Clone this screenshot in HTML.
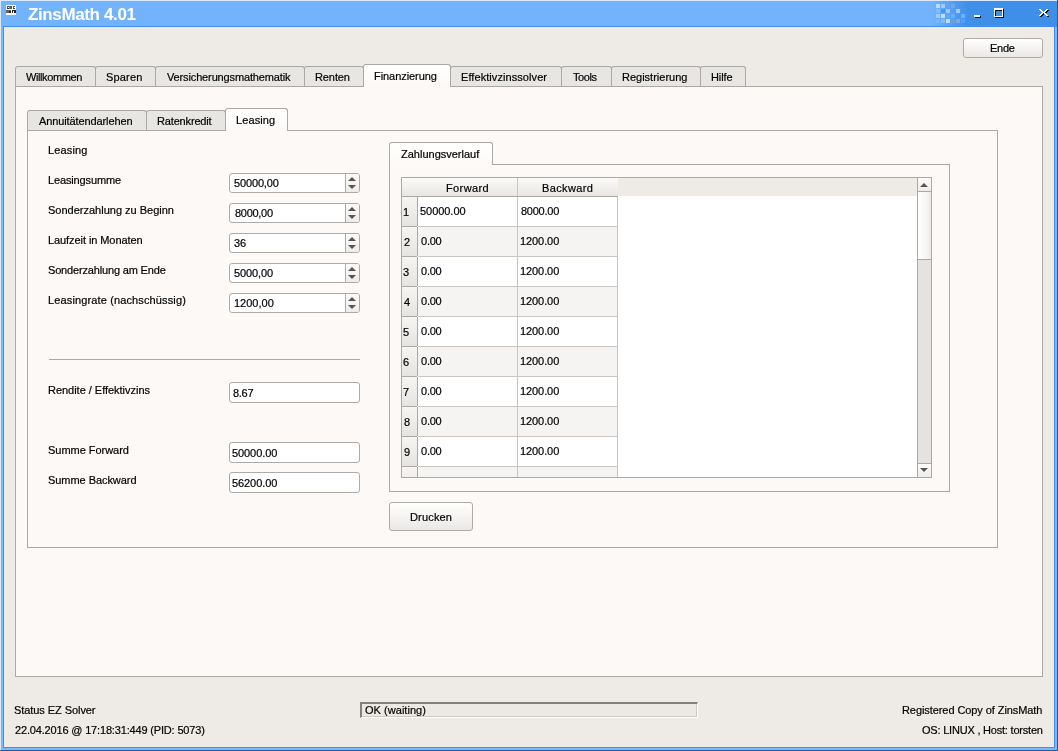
<!DOCTYPE html>
<html><head><meta charset="utf-8">
<style>
*{box-sizing:border-box;margin:0;padding:0}
html,body{width:1058px;height:751px;overflow:hidden;background:#eeebe7}
body{position:relative;font-family:'Liberation Sans',sans-serif;font-size:11px;color:#000}
.a{position:absolute}
.t{position:absolute;white-space:nowrap;line-height:20px;font-size:11px;z-index:20;will-change:transform;-webkit-text-stroke:0.2px currentColor}
.btn{position:absolute;border:1px solid #aeaaa7;border-radius:3px;background:linear-gradient(#ffffff,#f7f6f4 40%,#eae8e5)}
.tab{position:absolute;border:1px solid #aca8a6;border-bottom:none;border-radius:3px 3px 0 0;background:#e8e6e3;height:20px}
.tab.sel{background:linear-gradient(#ffffff,#fcf9f6);height:23px;z-index:5}
.panel{position:absolute;border:1px solid #aca8a6;background:#fcf9f6}
.fld{position:absolute;border:1px solid #aeaaa7;border-radius:3px;background:#fff}
.spbtn{position:absolute;background:linear-gradient(#fdfcfb,#eeebe8)}
.tri-up{position:absolute;width:0;height:0;border-left:4px solid transparent;border-right:4px solid transparent;border-bottom:4px solid #555}
.tri-dn{position:absolute;width:0;height:0;border-left:4px solid transparent;border-right:4px solid transparent;border-top:4px solid #555}
</style></head><body>
<!-- frame -->
<div class="a" style="left:0;top:0;width:1058px;height:751px;background:#7ab8fa"></div>
<div class="a" style="left:0;top:0;width:1px;height:751px;background:#d9e9fc"></div>
<div class="a" style="left:0;top:0;width:1058px;height:1px;background:#d9e9fc"></div>
<div class="a" style="left:1px;top:1px;width:1056px;height:26px;background:linear-gradient(90deg,#73b3fb 0,#73b3fb 930px,#3f8ee8 968px,#3f8ee8 100%)"></div>
<div class="a" style="left:1057px;top:0;width:1px;height:751px;background:#2b5b92"></div>
<div class="a" style="left:0;top:750px;width:1058px;height:1px;background:#2b5b92"></div>
<div class="a" style="left:3px;top:26px;width:1052px;height:722px;background:#3f8ff0"></div>
<!-- content bg -->
<div class="a" style="left:4px;top:27px;width:1050px;height:720px;background:#eeebe7"></div>
<!-- icon -->
<svg class="a" style="left:6px;top:5px" width="10" height="10" viewBox="0 0 10 10" shape-rendering="crispEdges">
<rect x="0" y="0" width="10" height="10" fill="#fff"/>
<rect x="1" y="1" width="2" height="1" fill="#444"/><rect x="1" y="1" width="1" height="3" fill="#555"/><rect x="1" y="3" width="2" height="1" fill="#333"/>
<rect x="3" y="1" width="1" height="3" fill="#777"/>
<rect x="4" y="1" width="2" height="3" fill="#555"/>
<rect x="7" y="1" width="2" height="1" fill="#555"/><rect x="7" y="2" width="1" height="1" fill="#666"/><rect x="7" y="3" width="2" height="1" fill="#333"/>
<rect x="0" y="5" width="5" height="3" fill="#666"/>
<rect x="3" y="6" width="2" height="2" fill="#222"/>
<rect x="6" y="5" width="2" height="1" fill="#222"/><rect x="6" y="5" width="1" height="3" fill="#222"/>
<rect x="8" y="5" width="2" height="3" fill="#222"/>
</svg>
<!-- checker -->
<div class="a" style="left:936px;top:4px;width:4px;height:4px;background:#bcdcff"></div><div class="a" style="left:941px;top:4px;width:4px;height:4px;background:#9ccaff"></div><div class="a" style="left:951px;top:4px;width:4px;height:4px;background:#6aa8f0"></div><div class="a" style="left:936px;top:9px;width:4px;height:4px;background:#80bcfc"></div><div class="a" style="left:941px;top:9px;width:4px;height:4px;background:#3d9bff"></div><div class="a" style="left:946px;top:9px;width:4px;height:4px;background:#9ccaff"></div><div class="a" style="left:956px;top:9px;width:4px;height:4px;background:#9ccaff"></div><div class="a" style="left:936px;top:14px;width:4px;height:4px;background:#a0ccff"></div><div class="a" style="left:941px;top:14px;width:4px;height:4px;background:#c0deff"></div><div class="a" style="left:946px;top:14px;width:4px;height:4px;background:#5aa8fa"></div><div class="a" style="left:951px;top:14px;width:4px;height:4px;background:#66b0ff"></div><div class="a" style="left:961px;top:14px;width:4px;height:4px;background:#6ab0fa"></div><div class="a" style="left:936px;top:19px;width:4px;height:4px;background:#78b8fc"></div><div class="a" style="left:941px;top:19px;width:4px;height:4px;background:#80bcfc"></div><div class="a" style="left:946px;top:19px;width:4px;height:4px;background:#c0deff"></div><div class="a" style="left:951px;top:19px;width:4px;height:4px;background:#6a9edc"></div><div class="a" style="left:956px;top:19px;width:4px;height:4px;background:#7aaae0"></div><div class="a" style="left:961px;top:19px;width:4px;height:4px;background:#4aa0ff"></div>
<!-- min / max / close -->
<div class="a" style="left:975px;top:16px;width:6px;height:2px;background:#111"></div>
<div class="a" style="left:974px;top:15px;width:6px;height:2px;background:#fff"></div>
<div class="a" style="left:995px;top:9px;width:9px;height:9px;border:1px solid #111;border-top-width:2px"></div>
<div class="a" style="left:994px;top:8px;width:9px;height:9px;border:1px solid #fff;border-top-width:2px;box-shadow:inset 1px 1px 0 #111"></div>
<svg class="a" style="left:1039px;top:9px" width="10" height="8" shape-rendering="crispEdges"><rect x="1" y="1" width="2" height="1" fill="#111"/><rect x="8" y="1" width="2" height="1" fill="#111"/><rect x="2" y="2" width="2" height="1" fill="#111"/><rect x="7" y="2" width="2" height="1" fill="#111"/><rect x="3" y="3" width="2" height="1" fill="#111"/><rect x="6" y="3" width="2" height="1" fill="#111"/><rect x="4" y="4" width="3" height="1" fill="#111"/><rect x="3" y="5" width="2" height="1" fill="#111"/><rect x="6" y="5" width="2" height="1" fill="#111"/><rect x="2" y="6" width="2" height="1" fill="#111"/><rect x="7" y="6" width="2" height="1" fill="#111"/><rect x="1" y="7" width="2" height="1" fill="#111"/><rect x="8" y="7" width="2" height="1" fill="#111"/><rect x="0" y="0" width="2" height="1" fill="#fff"/><rect x="7" y="0" width="2" height="1" fill="#fff"/><rect x="1" y="1" width="2" height="1" fill="#fff"/><rect x="6" y="1" width="2" height="1" fill="#fff"/><rect x="2" y="2" width="2" height="1" fill="#fff"/><rect x="5" y="2" width="2" height="1" fill="#fff"/><rect x="3" y="3" width="3" height="1" fill="#fff"/><rect x="2" y="4" width="2" height="1" fill="#fff"/><rect x="5" y="4" width="2" height="1" fill="#fff"/><rect x="1" y="5" width="2" height="1" fill="#fff"/><rect x="6" y="5" width="2" height="1" fill="#fff"/><rect x="0" y="6" width="2" height="1" fill="#fff"/><rect x="7" y="6" width="2" height="1" fill="#fff"/></svg>
<!-- Ende button -->
<div class="btn" style="left:963px;top:38px;width:80px;height:20px"></div>

<!-- main tabs -->
<div class="tab" style="left:15px;top:66px;width:81px"></div>
<div class="tab" style="left:95px;top:66px;width:61px"></div>
<div class="tab" style="left:155px;top:66px;width:150px"></div>
<div class="tab" style="left:304px;top:66px;width:60px"></div>
<div class="tab" style="left:450px;top:66px;width:112px"></div>
<div class="tab" style="left:561px;top:66px;width:51px"></div>
<div class="tab" style="left:611px;top:66px;width:90px"></div>
<div class="tab" style="left:700px;top:66px;width:46px"></div>
<div class="panel" style="left:15px;top:86px;width:1028px;height:591px"></div>
<div class="tab sel" style="left:363px;top:64px;width:88px"></div>

<!-- sub tabs -->
<div class="tab" style="left:27px;top:110px;width:120px"></div>
<div class="tab" style="left:146px;top:110px;width:80px"></div>
<div class="panel" style="left:27px;top:130px;width:971px;height:418px"></div>
<div class="tab sel" style="left:225px;top:108px;width:63px"></div>

<!-- spinners -->
<div id="spinners"></div>
<div class="fld" style="left:229px;top:173px;width:131px;height:20px;overflow:hidden"><div class="spbtn" style="left:115px;top:0;width:14px;height:18px;border-left:1px solid #aeaaa7"></div><div class="tri-up" style="left:118px;top:3px"></div><div class="tri-dn" style="left:118px;top:11px"></div></div>
<div class="fld" style="left:229px;top:203px;width:131px;height:20px;overflow:hidden"><div class="spbtn" style="left:115px;top:0;width:14px;height:18px;border-left:1px solid #aeaaa7"></div><div class="tri-up" style="left:118px;top:3px"></div><div class="tri-dn" style="left:118px;top:11px"></div></div>
<div class="fld" style="left:229px;top:233px;width:131px;height:20px;overflow:hidden"><div class="spbtn" style="left:115px;top:0;width:14px;height:18px;border-left:1px solid #aeaaa7"></div><div class="tri-up" style="left:118px;top:3px"></div><div class="tri-dn" style="left:118px;top:11px"></div></div>
<div class="fld" style="left:229px;top:263px;width:131px;height:20px;overflow:hidden"><div class="spbtn" style="left:115px;top:0;width:14px;height:18px;border-left:1px solid #aeaaa7"></div><div class="tri-up" style="left:118px;top:3px"></div><div class="tri-dn" style="left:118px;top:11px"></div></div>
<div class="fld" style="left:229px;top:293px;width:131px;height:20px;overflow:hidden"><div class="spbtn" style="left:115px;top:0;width:14px;height:18px;border-left:1px solid #aeaaa7"></div><div class="tri-up" style="left:118px;top:3px"></div><div class="tri-dn" style="left:118px;top:11px"></div></div>
<!-- separator -->
<div class="a" style="left:49px;top:359px;width:311px;height:1px;background:#aca8a6"></div>
<div class="fld" style="left:229px;top:382px;width:131px;height:21px"></div>
<div class="fld" style="left:229px;top:442px;width:131px;height:21px"></div>
<div class="fld" style="left:229px;top:472px;width:131px;height:21px"></div>

<!-- zahlungsverlauf -->
<div class="panel" style="left:389px;top:164px;width:561px;height:328px"></div>
<div class="tab sel" style="left:389px;top:142px;width:104px;height:23px"></div>

<!-- table pane -->
<div class="a" style="left:401px;top:177px;width:531px;height:301px;border:1px solid #aca8a6;background:#fff;overflow:hidden">
  <!-- header -->
  <div class="a" style="left:0;top:0;width:515px;height:18px;background:#eeebe7"></div>
  <div class="a" style="left:0;top:0;width:216px;height:18px;background:linear-gradient(#fbfaf8,#e9e7e4)"></div>
  <div class="a" style="left:0;top:18px;width:216px;height:1px;background:#aca8a6"></div>
  <div class="a" style="left:115px;top:0;width:1px;height:18px;background:#c9c6c2"></div>
  <div class="a" style="left:0;top:19px;width:15px;height:29px;background:linear-gradient(#f7f5f2,#e6e4e0)"></div><div class="a" style="left:15px;top:19px;width:1px;height:29px;background:#aca8a6"></div><div class="a" style="left:16px;top:19px;width:200px;height:29px;background:#fff"></div><div class="a" style="left:115px;top:19px;width:1px;height:29px;background:#c9c6c2"></div><div class="a" style="left:215px;top:19px;width:1px;height:29px;background:#c9c6c2"></div><div class="a" style="left:0;top:48px;width:15px;height:1px;background:#aca8a6"></div><div class="a" style="left:16px;top:48px;width:200px;height:1px;background:#c9c6c2"></div>
<div class="a" style="left:0;top:49px;width:15px;height:29px;background:linear-gradient(#f7f5f2,#e6e4e0)"></div><div class="a" style="left:15px;top:49px;width:1px;height:29px;background:#aca8a6"></div><div class="a" style="left:16px;top:49px;width:200px;height:29px;background:#f5f4f2"></div><div class="a" style="left:115px;top:49px;width:1px;height:29px;background:#c9c6c2"></div><div class="a" style="left:215px;top:49px;width:1px;height:29px;background:#c9c6c2"></div><div class="a" style="left:0;top:78px;width:15px;height:1px;background:#aca8a6"></div><div class="a" style="left:16px;top:78px;width:200px;height:1px;background:#c9c6c2"></div>
<div class="a" style="left:0;top:79px;width:15px;height:29px;background:linear-gradient(#f7f5f2,#e6e4e0)"></div><div class="a" style="left:15px;top:79px;width:1px;height:29px;background:#aca8a6"></div><div class="a" style="left:16px;top:79px;width:200px;height:29px;background:#fff"></div><div class="a" style="left:115px;top:79px;width:1px;height:29px;background:#c9c6c2"></div><div class="a" style="left:215px;top:79px;width:1px;height:29px;background:#c9c6c2"></div><div class="a" style="left:0;top:108px;width:15px;height:1px;background:#aca8a6"></div><div class="a" style="left:16px;top:108px;width:200px;height:1px;background:#c9c6c2"></div>
<div class="a" style="left:0;top:109px;width:15px;height:29px;background:linear-gradient(#f7f5f2,#e6e4e0)"></div><div class="a" style="left:15px;top:109px;width:1px;height:29px;background:#aca8a6"></div><div class="a" style="left:16px;top:109px;width:200px;height:29px;background:#f5f4f2"></div><div class="a" style="left:115px;top:109px;width:1px;height:29px;background:#c9c6c2"></div><div class="a" style="left:215px;top:109px;width:1px;height:29px;background:#c9c6c2"></div><div class="a" style="left:0;top:138px;width:15px;height:1px;background:#aca8a6"></div><div class="a" style="left:16px;top:138px;width:200px;height:1px;background:#c9c6c2"></div>
<div class="a" style="left:0;top:139px;width:15px;height:29px;background:linear-gradient(#f7f5f2,#e6e4e0)"></div><div class="a" style="left:15px;top:139px;width:1px;height:29px;background:#aca8a6"></div><div class="a" style="left:16px;top:139px;width:200px;height:29px;background:#fff"></div><div class="a" style="left:115px;top:139px;width:1px;height:29px;background:#c9c6c2"></div><div class="a" style="left:215px;top:139px;width:1px;height:29px;background:#c9c6c2"></div><div class="a" style="left:0;top:168px;width:15px;height:1px;background:#aca8a6"></div><div class="a" style="left:16px;top:168px;width:200px;height:1px;background:#c9c6c2"></div>
<div class="a" style="left:0;top:169px;width:15px;height:29px;background:linear-gradient(#f7f5f2,#e6e4e0)"></div><div class="a" style="left:15px;top:169px;width:1px;height:29px;background:#aca8a6"></div><div class="a" style="left:16px;top:169px;width:200px;height:29px;background:#f5f4f2"></div><div class="a" style="left:115px;top:169px;width:1px;height:29px;background:#c9c6c2"></div><div class="a" style="left:215px;top:169px;width:1px;height:29px;background:#c9c6c2"></div><div class="a" style="left:0;top:198px;width:15px;height:1px;background:#aca8a6"></div><div class="a" style="left:16px;top:198px;width:200px;height:1px;background:#c9c6c2"></div>
<div class="a" style="left:0;top:199px;width:15px;height:29px;background:linear-gradient(#f7f5f2,#e6e4e0)"></div><div class="a" style="left:15px;top:199px;width:1px;height:29px;background:#aca8a6"></div><div class="a" style="left:16px;top:199px;width:200px;height:29px;background:#fff"></div><div class="a" style="left:115px;top:199px;width:1px;height:29px;background:#c9c6c2"></div><div class="a" style="left:215px;top:199px;width:1px;height:29px;background:#c9c6c2"></div><div class="a" style="left:0;top:228px;width:15px;height:1px;background:#aca8a6"></div><div class="a" style="left:16px;top:228px;width:200px;height:1px;background:#c9c6c2"></div>
<div class="a" style="left:0;top:229px;width:15px;height:29px;background:linear-gradient(#f7f5f2,#e6e4e0)"></div><div class="a" style="left:15px;top:229px;width:1px;height:29px;background:#aca8a6"></div><div class="a" style="left:16px;top:229px;width:200px;height:29px;background:#f5f4f2"></div><div class="a" style="left:115px;top:229px;width:1px;height:29px;background:#c9c6c2"></div><div class="a" style="left:215px;top:229px;width:1px;height:29px;background:#c9c6c2"></div><div class="a" style="left:0;top:258px;width:15px;height:1px;background:#aca8a6"></div><div class="a" style="left:16px;top:258px;width:200px;height:1px;background:#c9c6c2"></div>
<div class="a" style="left:0;top:259px;width:15px;height:29px;background:linear-gradient(#f7f5f2,#e6e4e0)"></div><div class="a" style="left:15px;top:259px;width:1px;height:29px;background:#aca8a6"></div><div class="a" style="left:16px;top:259px;width:200px;height:29px;background:#fff"></div><div class="a" style="left:115px;top:259px;width:1px;height:29px;background:#c9c6c2"></div><div class="a" style="left:215px;top:259px;width:1px;height:29px;background:#c9c6c2"></div><div class="a" style="left:0;top:288px;width:15px;height:1px;background:#aca8a6"></div><div class="a" style="left:16px;top:288px;width:200px;height:1px;background:#c9c6c2"></div>
<div class="a" style="left:0;top:289px;width:15px;height:29px;background:linear-gradient(#f7f5f2,#e6e4e0)"></div><div class="a" style="left:15px;top:289px;width:1px;height:29px;background:#aca8a6"></div><div class="a" style="left:16px;top:289px;width:200px;height:29px;background:#f5f4f2"></div><div class="a" style="left:115px;top:289px;width:1px;height:29px;background:#c9c6c2"></div><div class="a" style="left:215px;top:289px;width:1px;height:29px;background:#c9c6c2"></div><div class="a" style="left:0;top:318px;width:15px;height:1px;background:#aca8a6"></div><div class="a" style="left:16px;top:318px;width:200px;height:1px;background:#c9c6c2"></div>
  <!-- scrollbar -->
  <div class="a" style="left:515px;top:0;width:1px;height:299px;background:#aca8a6"></div>
  <div class="a" style="left:516px;top:0;width:14px;height:13px;background:linear-gradient(#fdfcfb,#eeebe8)"></div>
  <div class="a" style="left:516px;top:13px;width:14px;height:1px;background:#aca8a6"></div>
  <div class="tri-up" style="left:518px;top:5px"></div>
  <div class="a" style="left:516px;top:14px;width:14px;height:67px;background:linear-gradient(90deg,#ffffff,#f6f5f3 60%,#e9e7e4)"></div>
  <div class="a" style="left:516px;top:81px;width:14px;height:1px;background:#aca8a6"></div>
  <div class="a" style="left:516px;top:82px;width:14px;height:203px;background:#e5e2df"></div>
  <div class="a" style="left:516px;top:285px;width:14px;height:1px;background:#aca8a6"></div>
  <div class="a" style="left:516px;top:286px;width:14px;height:13px;background:linear-gradient(#fdfcfb,#eeebe8)"></div>
  <div class="tri-dn" style="left:518px;top:290px"></div>
</div>

<!-- Drucken -->
<div class="btn" style="left:389px;top:502px;width:84px;height:29px"></div>

<!-- status -->
<div class="a" style="left:360px;top:702px;width:338px;height:16px;background:#ece9e5;border-top:2px solid #83817d;border-left:2px solid #83817d;border-right:1px solid #fff;border-bottom:1px solid #fff;box-shadow:inset -1px -1px 0 #cdcac6"></div>
<div class="t" style="left:28.00px;top:5px;font-size:17px;font-weight:700;color:#fff;letter-spacing:-0.375px;-webkit-text-stroke:0;">ZinsMath 4.01</div>
<div class="t" style="left:989.80px;top:38px;letter-spacing:-0.233px;">Ende</div>
<div class="t" style="left:25.90px;top:67px;letter-spacing:-0.400px;">Willkommen</div>
<div class="t" style="left:105.60px;top:67px;letter-spacing:0.160px;">Sparen</div>
<div class="t" style="left:166.90px;top:67px;letter-spacing:-0.136px;">Versicherungsmathematik</div>
<div class="t" style="left:314.50px;top:67px;letter-spacing:-0.100px;">Renten</div>
<div class="t" style="left:373.70px;top:66px;letter-spacing:-0.064px;">Finanzierung</div>
<div class="t" style="left:460.50px;top:67px;letter-spacing:0.071px;">Effektivzinssolver</div>
<div class="t" style="left:572.80px;top:67px;letter-spacing:-0.450px;">Tools</div>
<div class="t" style="left:621.50px;top:67px;">Registrierung</div>
<div class="t" style="left:710.50px;top:67px;letter-spacing:-0.125px;">Hilfe</div>
<div class="t" style="left:39.30px;top:111px;letter-spacing:-0.106px;">Annuitätendarlehen</div>
<div class="t" style="left:156.60px;top:111px;letter-spacing:-0.160px;">Ratenkredit</div>
<div class="t" style="left:235.70px;top:110px;letter-spacing:0.100px;">Leasing</div>
<div class="t" style="left:47.50px;top:140px;letter-spacing:0.133px;">Leasing</div>
<div class="t" style="left:47.50px;top:170px;letter-spacing:-0.136px;">Leasingsumme</div>
<div class="t" style="left:47.50px;top:200px;">Sonderzahlung zu Beginn</div>
<div class="t" style="left:47.50px;top:230px;letter-spacing:-0.078px;">Laufzeit in Monaten</div>
<div class="t" style="left:47.50px;top:260px;letter-spacing:-0.165px;">Sonderzahlung am Ende</div>
<div class="t" style="left:47.50px;top:290px;letter-spacing:0.132px;">Leasingrate (nachschüssig)</div>
<div class="t" style="left:47.50px;top:380px;letter-spacing:-0.024px;">Rendite / Effektivzins</div>
<div class="t" style="left:47.50px;top:440px;letter-spacing:-0.033px;">Summe Forward</div>
<div class="t" style="left:47.50px;top:470px;letter-spacing:-0.054px;">Summe Backward</div>
<div class="t" style="left:233.80px;top:173px;letter-spacing:-0.143px;">50000,00</div>
<div class="t" style="left:234.80px;top:203px;letter-spacing:-0.283px;">8000,00</div>
<div class="t" style="left:233.80px;top:233px;">36</div>
<div class="t" style="left:233.80px;top:263px;letter-spacing:-0.117px;">5000,00</div>
<div class="t" style="left:233.80px;top:293px;">1200,00</div>
<div class="t" style="left:233.00px;top:383px;letter-spacing:-0.300px;">8.67</div>
<div class="t" style="left:231.90px;top:443px;letter-spacing:-0.086px;">50000.00</div>
<div class="t" style="left:231.90px;top:473px;letter-spacing:-0.086px;">56200.00</div>
<div class="t" style="left:401.30px;top:144px;">Zahlungsverlauf</div>
<div class="t" style="left:445.70px;top:178px;letter-spacing:0.383px;">Forward</div>
<div class="t" style="left:541.80px;top:178px;letter-spacing:0.371px;">Backward</div>
<div class="t" style="left:402.60px;top:202px;">1</div>
<div class="t" style="left:419.80px;top:201px;letter-spacing:-0.043px;">50000.00</div>
<div class="t" style="left:520.80px;top:201px;letter-spacing:-0.250px;">8000.00</div>
<div class="t" style="left:403.60px;top:232px;">2</div>
<div class="t" style="left:420.80px;top:231px;letter-spacing:-0.233px;">0.00</div>
<div class="t" style="left:519.80px;top:231px;letter-spacing:-0.083px;">1200.00</div>
<div class="t" style="left:402.60px;top:262px;">3</div>
<div class="t" style="left:420.80px;top:261px;letter-spacing:-0.233px;">0.00</div>
<div class="t" style="left:519.80px;top:261px;letter-spacing:-0.083px;">1200.00</div>
<div class="t" style="left:403.60px;top:292px;">4</div>
<div class="t" style="left:420.80px;top:291px;letter-spacing:-0.233px;">0.00</div>
<div class="t" style="left:519.80px;top:291px;letter-spacing:-0.083px;">1200.00</div>
<div class="t" style="left:402.60px;top:322px;">5</div>
<div class="t" style="left:420.80px;top:321px;letter-spacing:-0.233px;">0.00</div>
<div class="t" style="left:519.80px;top:321px;letter-spacing:-0.083px;">1200.00</div>
<div class="t" style="left:402.60px;top:352px;">6</div>
<div class="t" style="left:420.80px;top:351px;letter-spacing:-0.233px;">0.00</div>
<div class="t" style="left:519.80px;top:351px;letter-spacing:-0.083px;">1200.00</div>
<div class="t" style="left:402.60px;top:382px;">7</div>
<div class="t" style="left:420.80px;top:381px;letter-spacing:-0.233px;">0.00</div>
<div class="t" style="left:519.80px;top:381px;letter-spacing:-0.083px;">1200.00</div>
<div class="t" style="left:403.60px;top:412px;">8</div>
<div class="t" style="left:420.80px;top:411px;letter-spacing:-0.233px;">0.00</div>
<div class="t" style="left:519.80px;top:411px;letter-spacing:-0.083px;">1200.00</div>
<div class="t" style="left:403.60px;top:442px;">9</div>
<div class="t" style="left:420.80px;top:441px;letter-spacing:-0.233px;">0.00</div>
<div class="t" style="left:519.80px;top:441px;letter-spacing:-0.083px;">1200.00</div>
<div class="t" style="left:409.50px;top:507px;letter-spacing:0.167px;">Drucken</div>
<div class="t" style="left:13.80px;top:700px;letter-spacing:-0.067px;">Status EZ Solver</div>
<div class="t" style="left:14.60px;top:720px;letter-spacing:-0.167px;">22.04.2016 @ 17:18:31:449 (PID: 5073)</div>
<div class="t" style="left:364.90px;top:700px;letter-spacing:0.036px;">OK (waiting)</div>
<div class="t" style="left:901.70px;top:700px;letter-spacing:-0.077px;">Registered Copy of ZinsMath</div>
<div class="t" style="left:921.70px;top:720px;letter-spacing:-0.208px;">OS: LINUX , Host: torsten</div>
</body></html>
